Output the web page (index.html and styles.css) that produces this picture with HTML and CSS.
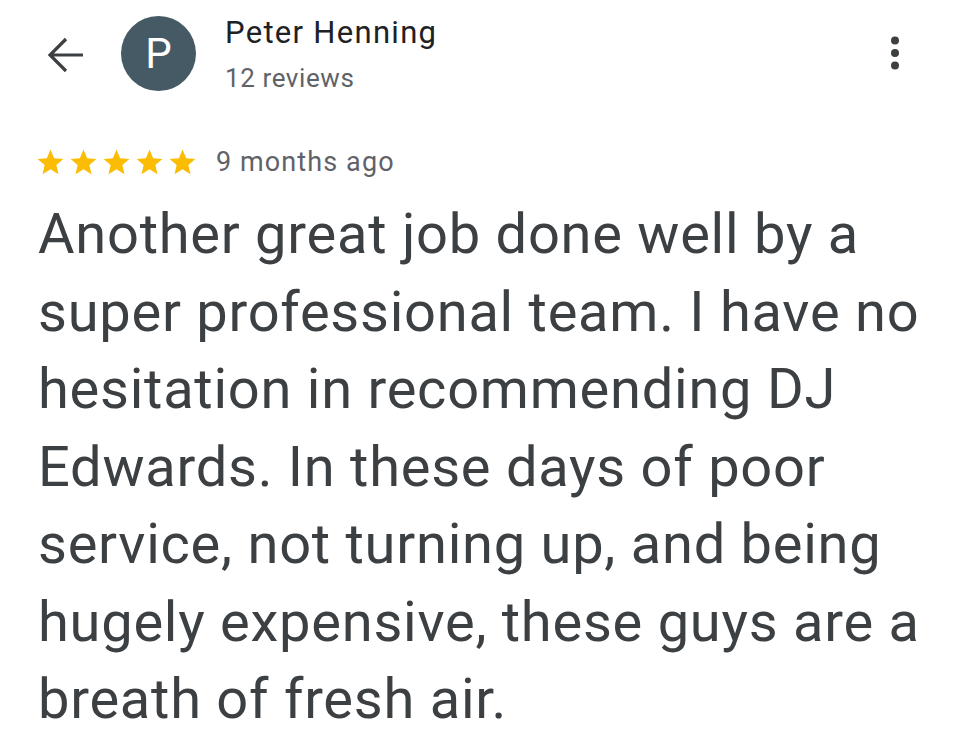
FILE: index.html
```html
<!DOCTYPE html>
<html>
<head>
<meta charset="utf-8">
<link rel="stylesheet" href="styles.css">
</head>
<body>
<div class="page">
  <header class="top">
    <svg class="back" viewBox="0 0 40 40" width="40" height="40"><path d="M37 20H4M20 4L4 20L20 36" fill="none" stroke="#3c4043" stroke-width="3.2" stroke-linejoin="miter"/></svg>
    <div class="avatar">P</div>
    <div class="who">
      <div class="name">Peter Henning</div>
      <div class="count">12 reviews</div>
    </div>
    <svg class="more" viewBox="0 0 12 36" width="12" height="36"><circle cx="6" cy="5.5" r="4" fill="#3c4043"/><circle cx="6" cy="18" r="4" fill="#3c4043"/><circle cx="6" cy="30.5" r="4" fill="#3c4043"/></svg>
  </header>
  <div class="meta">
    <div class="stars">
      <svg viewBox="0 0 24 24"><path d="M12 17.27L18.18 21l-1.64-7.03L22 9.24l-7.19-.61L12 2 9.19 8.63 2 9.240l5.46 4.73L5.82 21z"/></svg>
      <svg viewBox="0 0 24 24"><path d="M12 17.27L18.18 21l-1.64-7.03L22 9.24l-7.19-.61L12 2 9.19 8.63 2 9.24l5.46 4.73L5.82 21z"/></svg>
      <svg viewBox="0 0 24 24"><path d="M12 17.27L18.18 21l-1.64-7.03L22 9.24l-7.19-.61L12 2 9.19 8.63 2 9.24l5.46 4.73L5.82 21z"/></svg>
      <svg viewBox="0 0 24 24"><path d="M12 17.27L18.18 21l-1.64-7.03L22 9.24l-7.19-.61L12 2 9.19 8.63 2 9.24l5.46 4.73L5.82 21z"/></svg>
      <svg viewBox="0 0 24 24"><path d="M12 17.27L18.18 21l-1.64-7.03L22 9.24l-7.19-.61L12 2 9.19 8.63 2 9.24l5.46 4.73L5.82 21z"/></svg>
    </div>
    <span class="when">9 months ago</span>
  </div>
  <p class="review">Another great job done well by a super professional team. I have no hesitation in recommending DJ Edwards. In these days of poor service, not turning up, and being hugely expensive, these guys are a breath of fresh air.</p>
</div>
</body>
</html>
```

FILE: styles.css
```css
html, body {
  margin: 0;
  padding: 0;
  background: #ffffff;
}
body {
  width: 960px;
  height: 756px;
  overflow: hidden;
  font-family: Roboto, "Noto Sans", sans-serif;
  color: #3c4043;
}
.page {
  padding: 0 20px 0 38px;
}
.top {
  display: flex;
  align-items: flex-start;
  height: 130px;
}
.back {
  margin-top: 35px;
  margin-left: 8px;
  width: 40px;
  height: 40px;
  flex: none;
}
.avatar {
  margin-left: 35px;
  margin-top: 16px;
  width: 75px;
  height: 75px;
  border-radius: 50%;
  background: #455a64;
  color: #ffffff;
  font-size: 42px;
  display: flex;
  align-items: center;
  justify-content: center;
  flex: none;
}
.who {
  margin-left: 29px;
  margin-top: 13px;
  flex: 1;
}
.name {
  font-size: 31px;
  letter-spacing: 1.3px;
  color: #202124;
  line-height: 40px;
}
.count {
  font-size: 26px;
  letter-spacing: 0.6px;
  color: #5f6368;
  line-height: 34px;
  margin-top: 8px;
}
.more {
  margin-top: 35px;
  margin-right: 39px;
  flex: none;
}
.meta {
  display: flex;
  align-items: center;
  gap: 18px;
  height: 40px;
  margin-top: 12px;
  margin-left: -3px;
}
.stars {
  display: flex;
  gap: 2px;
}
.stars svg {
  width: 31px;
  height: 31px;
  fill: #fbbc04;
}
.when {
  font-size: 27px;
  letter-spacing: 1.1px;
  color: #5f6368;
}
.review {
  margin: 14px 0 0 0;
  font-size: 56px;
  letter-spacing: 0.75px;
  line-height: 77.5px;
  color: #3c4043;
}
```
